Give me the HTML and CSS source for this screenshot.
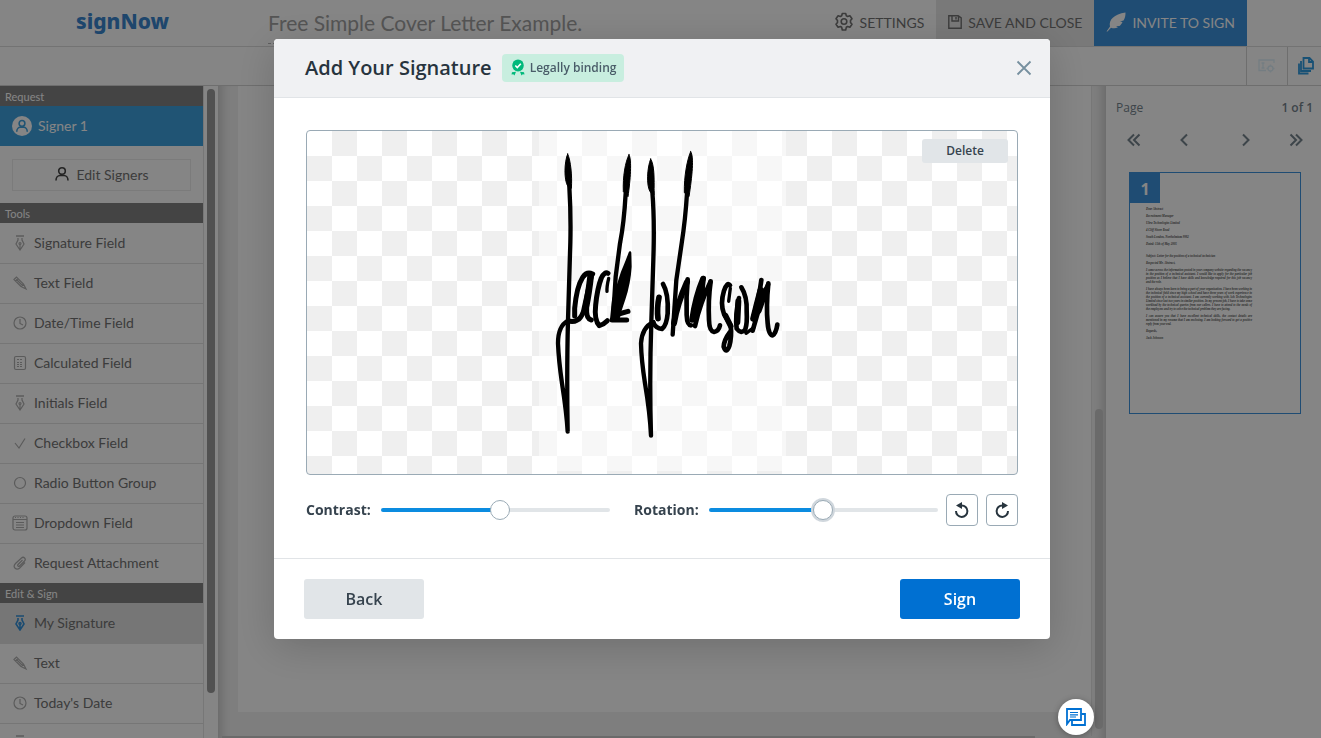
FILE: index.html
```html
<!DOCTYPE html>
<html lang="en">
<head>
    <meta charset="UTF-8">
    <meta name="viewport" content="width=device-width, initial-scale=1.0">
    <title>signNow - Add Your Signature</title>
    <link rel="stylesheet" href="styles.css">
</head>
<body>
    <!-- shared icons -->
    <svg class="sprite" width="0" height="0">
        <symbol id="pen" viewBox="0 0 16 16">
            <path d="M4 1h8" stroke-width="1.5"/>
            <path d="M6 3v2L4 9l4 6 4-6-2-4V3M8 14V9.500"/>
            <circle cx="8" cy="8.500" r="1"/>
        </symbol>
        <symbol id="pencil" viewBox="0 0 16 16">
            <path d="M2 4.500 4.500 2l7 7 2.500 5-5-2.500zM3.500 6 6 3.500M4.500 4.500l6 6M9 11.500 11.500 9"/>
        </symbol>
        <symbol id="clock" viewBox="0 0 16 16">
            <circle cx="8" cy="8" r="6"/>
            <path d="M8 4v4.500l3 1.500"/>
        </symbol>
        <symbol id="calc" viewBox="0 0 16 16">
            <rect x="2.500" y="1.500" width="11" height="13" rx="1.500"/>
            <path d="M5 4.500h6M5 7.500h6M5 9.500h6M5 11.500h6" stroke-dasharray="2 1"/>
        </symbol>
        <symbol id="check" viewBox="0 0 16 16"><path d="m3 8 4 5 6-9.500"/></symbol>
        <symbol id="radio" viewBox="0 0 16 16"><circle cx="8" cy="8" r="5.500"/></symbol>
        <symbol id="list" viewBox="0 0 16 16">
            <rect x="1" y="1" width="14" height="14" rx="2"/>
            <path d="M1 4.500h14M4 7.500h8M4 10h8M4 12.500h8"/>
            <path d="M3 2.500h10" stroke-dasharray="1 1.500"/>
        </symbol>
        <symbol id="clip" viewBox="0 0 16 16">
            <path d="M10.500 5 6 9.500c-1 1.200.5 2.500 1.500 1.500l5-5c2-2-.8-5-3-3L3.500 8.500c-3.500 3.700 1 7.500 4.200 4.500L13 7.500"/>
        </symbol>
        <symbol id="person" viewBox="0 0 16 16">
            <circle cx="8" cy="5" r="3.300"/>
            <path d="M2 14.500c0-3 2-5 4-5h4c2 0 4 2 4 5"/>
        </symbol>
    </svg>

    <div class="app">
        <header class="topbar">
            <a class="logo" href="#">signNow</a>
            <input class="doc-title" type="text" aria-label="Document name" value="Free Simple Cover Letter Example.">
            <button class="top-btn">
                <svg width="20" height="20" viewBox="0 0 20 20" fill="none" stroke="currentColor" stroke-width="1.600" stroke-linejoin="round"><path d="m8.300 1.500h3.400l.6 2.300 1.300.7 2.300-.7 2.100 2.900-1.500 1.900v1.800l1.500 1.900-2.100 2.900-2.300-.7-1.300.8-.6 2.700H8.300l-.6-2.700-1.300-.8-2.300.7L2 12.300l1.500-1.900V8.600L2 6.700l2.100-2.900 2.300.7 1.300-.7z"/><circle cx="10" cy="9.500" r="2.800"/></svg>
                <span>SETTINGS</span>
            </button>
            <button class="top-btn save">
                <svg width="14" height="14" viewBox="0 0 14 14" fill="none" stroke="currentColor" stroke-width="1.400"><path d="M.8.800h9.400l3 2v10.400H.800zM4 1v5h6.500V1M8 2v2.500"/></svg>
                <span>SAVE AND CLOSE</span>
            </button>
            <button class="top-btn invite">
                <svg width="20" height="20" viewBox="0 0 20 20" fill="currentColor"><path d="M.5 19.500 4 14.500C2.500 8 8 2 19.500.500 19.500 4 19 6 17.500 8.500L14 9.500l2.500.5c-.8 1.800-1.800 3-3 4L10 14.200l2 1c-2 1.200-4.300 1.400-7 .5l-3.500 3.800z"/></svg>
                <span>INVITE TO SIGN</span>
            </button>
        </header>

        <div class="toolbar">
            <button class="tool-btn" aria-label="Field settings" disabled>
                <svg width="18" height="14" viewBox="0 0 18 14" fill="none" stroke="#dff0fa" stroke-width="1.300"><path d="M8 11.500H1V1h15v3M3.500 4h3M5 4v5M3.500 9h3"/><circle cx="12.500" cy="9.500" r="2.500"/><path d="M12.500 5.500v1.500M12.500 12v1.500M8.500 9.500H10M15 9.500h1.500"/></svg>
            </button>
            <button class="tool-btn" aria-label="Pages">
                <svg width="16" height="18" viewBox="0 0 16 18" fill="none" stroke="#2f9be0" stroke-width="1.800"><path d="M5.500 1h6l3.500 3.500v7H5.500zM11 1v4h4M3 4v10h10M1 6.500V16.500h9.500"/></svg>
            </button>
        </div>

        <div class="workspace">
            <aside class="sidebar">
                <nav class="tools">
                    <h2 class="section">Request</h2>
                    <button class="signer">
                        <span class="avatar"><svg class="icon"><use href="#person"/></svg></span>
                        Signer 1
                    </button>
                    <div class="edit-wrap">
                        <button class="edit-signers"><svg class="icon"><use href="#person"/></svg>Edit Signers</button>
                    </div>
                    <h2 class="section">Tools</h2>
                    <button class="item"><svg class="icon"><use href="#pen"/></svg>Signature Field</button>
                    <button class="item"><svg class="icon"><use href="#pencil"/></svg>Text Field</button>
                    <button class="item"><svg class="icon"><use href="#clock"/></svg>Date/Time Field</button>
                    <button class="item"><svg class="icon"><use href="#calc"/></svg>Calculated Field</button>
                    <button class="item"><svg class="icon"><use href="#pen"/></svg>Initials Field</button>
                    <button class="item"><svg class="icon"><use href="#check"/></svg>Checkbox Field</button>
                    <button class="item"><svg class="icon"><use href="#radio"/></svg>Radio Button Group</button>
                    <button class="item"><svg class="icon"><use href="#list"/></svg>Dropdown Field</button>
                    <button class="item"><svg class="icon"><use href="#clip"/></svg>Request Attachment</button>
                    <h2 class="section">Edit &amp; Sign</h2>
                    <button class="item active"><svg class="icon"><use href="#pen"/></svg>My Signature</button>
                    <button class="item"><svg class="icon"><use href="#pencil"/></svg>Text</button>
                    <button class="item"><svg class="icon"><use href="#clock"/></svg>Today's Date</button>
                    <button class="item"><svg class="icon"><use href="#pen"/></svg>My Initials</button>
                </nav>
                <div class="scroll"><div class="scroll-thumb"></div></div>
            </aside>

            <main class="document">
                <div class="document-row">
                    <div class="paper"></div>
                    <div class="scroll scroll-doc"><div class="scroll-thumb"></div></div>
                </div>
                <div class="scroll-x"><div class="scroll-x-thumb"></div></div>
            </main>

            <aside class="pages">
                <div class="pages-head"><span>Page</span><b>1 of 1</b></div>
                <div class="pager">
                    <button aria-label="First page"><svg width="14" height="14" viewBox="0 0 14 14"><path d="M7 1.500 1.500 7 7 12.500M12.500 1.500 7 7l5.500 5.500"/></svg></button>
                    <button aria-label="Previous page"><svg width="14" height="14" viewBox="0 0 14 14"><path d="M10 1.500 4.500 7l5.500 5.500"/></svg></button>
                    <button aria-label="Next page"><svg width="14" height="14" viewBox="0 0 14 14"><path d="M4 1.500 9.500 7 4 12.500"/></svg></button>
                    <button aria-label="Last page"><svg width="14" height="14" viewBox="0 0 14 14"><path d="M7 1.500 12.500 7 7 12.500M1.500 1.500 7 7l-5.500 5.500"/></svg></button>
                </div>
                <div class="thumb">
                    <span class="thumb-number">1</span>
                    <div class="letter">
                        <p>Dear Abstract</p>
                        <p>Recruitment Manager</p>
                        <p>Ultra Technologies Limited</p>
                        <p>4 Cliff Shore Road</p>
                        <p>South London, Northolmium 9982</p>
                        <p>Dated: 11th of May 2005</p>
                        <p class="subject">Subject: Letter for the position of a technical technician</p>
                        <p>Respected Mr. Abstract,</p>
                        <p>I came across the information posted in your company website regarding the vacancy in the position of a technical assistant. I would like to apply for the particular job position as I believe that I have skills and knowledge required for this job vacancy and the role.</p>
                        <p>I have always been keen to being a part of your organization. I have been working in the technical field since my high school and have three years of work experience in the position of a technical assistant. I am currently working with Ash Technologies Limited since last two years in similar position. In my present job, I have to take some workload by the technical queries from our callers. I have to attend to the needs of the employees and try to solve the technical problem they are facing.</p>
                        <p>I can assure you that I have excellent technical skills, the contact details are mentioned in my resume that I am enclosing. I am looking forward to get a positive reply from your end.</p>
                        <p>Regards,</p>
                        <p>Jack Johnson</p>
                    </div>
                </div>
            </aside>
        </div>
    </div>

    <div class="overlay">
        <div class="modal" role="dialog" aria-labelledby="modal-title">
            <div class="modal-header">
                <h1 id="modal-title">Add Your Signature</h1>
                <span class="badge">
                    <svg width="14" height="17" viewBox="0 0 14 17"><path fill="#00b97b" d="M7 .5 9.200 1l2.200 1.300 1 2.200.4 2-.4 2-1 2L9.200 12 7 12.400 4.800 12 2.600 10.500l-1-2-.4-2 .4-2 1-2.200L4.800 1zM1 13.200l4-.4L3.500 16.500l-1.200-1.200-1.800.3zM13 13.200l-4-.4 1.500 3.700 1.200-1.200 1.800.3z"/><path d="m4.300 6.500 2 2 3.500-3.700" fill="none" stroke="#fff" stroke-width="1.600"/></svg>
                    Legally binding
                </span>
                <button class="close" aria-label="Close">
                    <svg width="16" height="16" viewBox="0 0 16 16" fill="none" stroke="#76909f" stroke-width="1.800"><path d="m1.500 1.500 13 13M14.500 1.500l-13 13"/></svg>
                </button>
            </div>

            <div class="modal-body">
                <div class="signature-area">
                    <svg class="signature" viewBox="-3 -327 741 1020" fill="none" stroke="#000" stroke-width="13" stroke-linecap="round" stroke-linejoin="round">
                        <!-- thick tops of the four stems -->
                        <g fill="#000" stroke-width="3">
                            <path d="M83-258C92-240 97-190 94-155L84-160C71-180 73-235 83-258z"/>
                            <path d="M267-256C276-240 271-180 264-130L250-145C248-190 256-235 267-256z"/>
                            <path d="M332-243C343-225 343-190 342-135L330-145C319-165 321-215 332-243z"/>
                            <path d="M452-265C463-250 456-190 447-130L433-142C432-190 441-240 452-265z"/>
                        </g>
                        <!-- Jack -->
                        <path d="M88-160Q94-60 90 40L84 240Q80 390 83 575 80 520 66 430 56 360 54 310 54 258 84 242"/>
                        <path d="M257-140Q252-50 240 10L227 110 219 238"/>
                        <g stroke-width="15">
                            <path d="M84 242Q98 248 112 240 122 236 130 216L153 112"/>
                            <path d="M158 102Q140 94 128 112 110 140 104 205V228"/>
                            <path stroke-width="20" d="M152 108Q146 160 138 200"/>
                            <path d="M140 205Q138 236 154 240"/>
                            <path stroke-width="10" d="M201 154Q200 140 206 115"/>
                            <path d="M204 100Q194 94 184 114 172 145 167 195 162 240 178 257 190 254 202 242"/>
                            <path d="M216 240H260M264 214 236 222"/>
                        </g>
                        <path fill="#000" stroke-width="8" d="M270 38Q262 60 247 96L220 180 214 238 234 240Q240 210 252 178 268 130 271 80z"/>
                        <!-- Johnson -->
                        <path d="M337-145Q344-60 340 60L334 245Q328 420 333 587 330 520 315 430 304 360 303 310 306 262 340 246"/>
                        <path d="M441-140Q436-60 425 10L409 120 398 284"/>
                        <g stroke-width="14">
                            <path d="M340 248Q348 266 366 267 380 256 383 220 386 160 369 132"/>
                            <path stroke-width="17" d="M357 172Q350 205 354 236"/>
                            <path stroke-width="18" d="M402 250Q412 190 441 126"/>
                            <path d="M443 118Q438 170 440 225 441 256 453 256"/>
                            <path stroke-width="17" d="M456 240Q466 170 489 116"/>
                            <path d="M491 114Q484 190 465 258 480 190 511 126"/>
                            <path stroke-width="17" d="M486 140Q476 175 468 222"/>
                            <path d="M512 124Q504 180 507 240 508 274 522 276 536 274 540 256"/>
                            <path stroke-width="10" d="M566 184 571 145"/>
                            <path d="M570 136Q562 124 552 152 540 192 552 222L572 256Q576 290 568 318 559 344 551 320 552 300 570 276"/>
                            <path stroke-width="17" d="M556 226 572 258"/>
                            <path d="M597 174Q585 225 590 266 604 284 616 268 622 250 620 215 622 170 604 142"/>
                            <path stroke-width="18" d="M595 184 592 246"/>
                            <path stroke-width="10" d="M618 280 642 262"/>
                            <path d="M664 120Q658 170 640 232"/>
                            <path stroke-width="19" d="M662 150Q650 195 640 236"/>
                            <path d="M638 272Q660 190 684 134"/>
                            <path stroke-width="18" d="M678 150 656 212"/>
                            <path d="M685 130Q678 200 683 250 686 286 698 286 708 280 712 254"/>
                        </g>
                    </svg>
                    <button class="delete">Delete</button>
                </div>

                <div class="controls">
                    <label for="contrast">Contrast:</label>
                    <input type="range" class="slider" id="contrast" min="0" max="100" value="52" style="--value: 52%">
                    <label for="rotation">Rotation:</label>
                    <input type="range" class="slider focused" id="rotation" min="-180" max="180" value="0" style="--value: 50%">
                    <button class="rotate" aria-label="Rotate left">
                        <svg width="16" height="18" viewBox="0 0 16 18"><path d="M2 10A5.700 5.700 0 1 0 7.500 4.500H5" fill="none" stroke="#27343e" stroke-width="2"/><path d="M2 4.500 8 1v7z" fill="#27343e"/></svg>
                    </button>
                    <button class="rotate" aria-label="Rotate right">
                        <svg width="16" height="18" viewBox="0 0 16 18"><path d="M14 10A5.700 5.700 0 1 1 8.500 4.500H11" fill="none" stroke="#27343e" stroke-width="2"/><path d="M14 4.500 8 1v7z" fill="#27343e"/></svg>
                    </button>
                </div>
            </div>

            <div class="modal-footer">
                <button class="btn">Back</button>
                <button class="btn primary">Sign</button>
            </div>
        </div>
    </div>

    <button class="chat" aria-label="Chat">
        <svg width="20" height="18" viewBox="0 0 20 18" fill="none" stroke="#0070d2" stroke-width="1.800"><path d="M1 16V1h14v11H4z"/><path d="M15.500 6H19v11H6v-4.500"/><path d="M4 4.500h8M4 6.800h8M4 9h6" stroke-width="1.200"/></svg>
    </button>
</body>
</html>
```

FILE: styles.css
```css
* {
    box-sizing: border-box;
}
body {
    margin: 0;
    font-family: Lato, sans-serif;
    color: #737373;
    overflow: hidden;
}
button {
    font: inherit;
    color: inherit;
    background: none;
    border: none;
    padding: 0;
    cursor: pointer;
}
.sprite {
    position: absolute;
}
.icon {
    width: 16px;
    height: 16px;
    flex: none;
    fill: none;
    stroke: #afafaf;
    stroke-width: 1.2;
}
.app {
    display: flex;
    flex-direction: column;
    height: 100vh;
    background-color: white;
}

/* top bars */
.topbar {
    display: flex;
    height: 47px;
    padding-right: 74px;
    border-bottom: 1px solid #dcdcdc;
}
.logo {
    width: 268px;
    padding-left: 76px;
    font-family: "Noto Sans", sans-serif;
    font-size: 21px;
    font-weight: 800;
    line-height: 42px;
    color: #3a86d0;
    text-decoration: none;
}
.doc-title {
    flex: 1;
    min-width: 0;
    height: 44px;
    margin-right: 160px;
    padding: 2px 0 0;
    border: none;
    border-bottom: 1px dashed #b5b5b5;
    background: none;
    font-family: Lato, sans-serif;
    font-size: 21px;
    color: #a2a2a2;
}
.top-btn {
    display: flex;
    align-items: center;
    gap: 6px;
    padding: 0 12px 2px;
    font-size: 14px;
    white-space: nowrap;
}
.save {
    background-color: #e8e8e8;
}
.invite {
    background-color: #3c92dd;
    color: white;
}
.toolbar {
    display: flex;
    justify-content: flex-end;
    height: 39px;
    border-bottom: 1px solid #d4d4d4;
}
.tool-btn {
    display: flex;
    align-items: center;
    justify-content: center;
    width: 41px;
    border-left: 1px solid #d4d4d4;
}
.tool-btn:last-child {
    width: 34px;
    padding-left: 3px;
}

/* left sidebar */
.workspace {
    display: flex;
    flex: 1;
    min-height: 0;
}
.sidebar {
    display: flex;
    flex: none;
    width: 218px;
    overflow: hidden;
}
.tools {
    width: 203px;
    font-size: 14px;
}
.section {
    margin: 0;
    height: 20px;
    padding: 1px 5px;
    background-color: #838383;
    color: white;
    font-size: 11px;
    font-weight: normal;
    line-height: 20px;
}
.signer {
    display: flex;
    align-items: center;
    gap: 6px;
    width: 100%;
    height: 40px;
    padding: 0 0 1px 12px;
    background-color: #3ea2df;
    color: white;
}
.avatar {
    display: flex;
    align-items: center;
    justify-content: center;
    width: 20px;
    height: 20px;
    border-radius: 50%;
    background-color: white;
}
.avatar .icon {
    width: 14px;
    height: 14px;
    stroke: #3ea2df;
    stroke-width: 1.8;
}
.edit-wrap {
    padding: 13px 12px 12px;
}
.edit-signers {
    display: flex;
    align-items: center;
    justify-content: center;
    gap: 6px;
    width: 100%;
    height: 32px;
    padding-bottom: 2px;
    border: 1px solid #ececec;
}
.edit-signers .icon {
    stroke: #444;
    stroke-width: 1.6;
}
.item {
    display: flex;
    align-items: center;
    gap: 6px;
    width: 100%;
    height: 40px;
    padding: 0 0 2px 12px;
    border-top: 1px solid #e2e2e2;
}
.section + .item {
    border-top-color: transparent;
}
.item.active {
    background-color: #e2e2e2;
}
.item.active .icon {
    stroke: #3390d8;
    stroke-width: 1.6;
}
.scroll {
    width: 15px;
    padding: 3px 3px 0;
    border-left: 1px solid #e4e4e4;
}
.scroll-thumb {
    width: 8px;
    height: 93%;
    border-radius: 4px;
    background-color: #9c9c9c;
}

/* document */
.document {
    display: flex;
    flex-direction: column;
    flex: 1;
    min-width: 0;
    background-color: #f2f2f2;
    box-shadow: inset 12px 0 10px -8px #ccc, inset -12px 0 10px -8px #ccc;
}
.document-row {
    display: flex;
    flex: 1;
    padding-left: 20px;
}
.paper {
    flex: 1;
    margin-bottom: 24px;
    background-color: white;
}
.scroll-doc {
    display: flex;
    align-items: flex-end;
    padding-bottom: 7px;
}
.scroll-doc .scroll-thumb {
    height: 50%;
    background-color: #ccc;
}
.scroll-x {
    height: 2px;
    padding-left: 4px;
}
.scroll-x-thumb {
    width: 92%;
    height: 2px;
    background-color: #ccc;
}

/* pages panel */
.pages {
    flex: none;
    width: 215px;
    color: #76848e;
    font-family: "Open Sans", sans-serif;
}
.pages-head {
    display: flex;
    justify-content: space-between;
    padding: 12px 8px 0 10px;
    font-size: 12px;
    line-height: 20px;
}
.pages-head b {
    font-weight: 600;
}
.pager {
    display: flex;
    justify-content: space-between;
    padding: 14px 18px 24px 21px;
}
.pager button {
    display: flex;
    height: 16px;
    align-items: center;
}
.pager button:nth-child(2) {
    margin-right: 12px;
}
.pager svg {
    fill: none;
    stroke: #76848e;
    stroke-width: 2;
}
.thumb {
    height: 242px;
    margin: 0 20px 0 23px;
    border: 1px solid #3c92dd;
}
.thumb-number {
    display: block;
    width: 30px;
    height: 30px;
    background-color: #3c92dd;
    color: white;
    font-size: 16px;
    font-weight: bold;
    line-height: 32px;
    text-align: center;
}
.letter {
    padding: 4px 48px 0 16px;
    color: #555;
    font-family: "Liberation Serif", serif;
    font-size: 3px;
    font-style: italic;
    font-weight: bold;
    line-height: 4px;
    text-align: justify;
}
.letter p {
    margin: 0 0 3px;
}
.letter .subject {
    margin-top: 8px;
}

/* modal */
.overlay {
    position: fixed;
    inset: 0;
    display: flex;
    justify-content: center;
    align-items: flex-start;
    padding: 39px 0 0 3px;
    background-color: rgba(0, 0, 0, 0.48);
    font-family: "Open Sans", sans-serif;
    color: #36434e;
}
.modal {
    width: 776px;
    border-radius: 4px;
    background-color: white;
    box-shadow: 0 8px 40px rgba(0, 0, 0, 0.18);
    overflow: hidden;
}
.modal-header {
    display: flex;
    align-items: center;
    height: 59px;
    padding: 0 18px 0 31px;
    border-bottom: 1px solid #e1e4e7;
    background-color: #f0f1f3;
}
.modal-header h1 {
    margin: 0;
    padding-bottom: 2px;
    font-size: 20px;
    font-weight: 600;
    color: #27343e;
}
.badge {
    display: flex;
    align-items: center;
    gap: 5px;
    height: 28px;
    margin-left: 10px;
    padding: 0 8px 1px 9px;
    border-radius: 4px;
    background-color: #c8eedf;
    color: #4a5d69;
    font-size: 12px;
    font-weight: 600;
}
.close {
    display: flex;
    margin-left: auto;
}
.modal-body {
    padding: 32px;
}
.signature-area {
    position: relative;
    height: 345px;
    border: 1px solid #9aaab5;
    border-radius: 4px;
    background: repeating-conic-gradient(#efefef 0 25%, white 0 50%) 0 0 / 50px 50px;
    overflow: hidden;
}
.signature {
    display: block;
    width: 247px;
    height: 340px;
    margin: 0 auto;
    background-color: rgba(255, 255, 255, 0.5);
}
.delete {
    position: absolute;
    top: 8px;
    right: 9px;
    width: 86px;
    height: 24px;
    padding-bottom: 2px;
    border-radius: 3px;
    background-color: #e1e5e8;
    font-size: 12px;
    font-weight: 600;
}
.controls {
    display: flex;
    align-items: center;
    gap: 8px;
    margin-top: 19px;
    font-size: 14px;
    font-weight: bold;
}
.controls label {
    padding-bottom: 2px;
}
.slider + label {
    margin-left: 16px;
}
.slider {
    -webkit-appearance: none;
    appearance: none;
    flex: 1;
    min-width: 0;
    height: 20px;
    margin: 0 0 0 2px;
    background: none;
}
.slider::-webkit-slider-runnable-track {
    height: 4px;
    border-radius: 2px;
    background: linear-gradient(to right, #0c8ce0 var(--value), #e1e5e8 var(--value));
}
.slider::-webkit-slider-thumb {
    -webkit-appearance: none;
    width: 20px;
    height: 20px;
    margin-top: -8px;
    border: 1px solid #9aaab5;
    border-radius: 50%;
    background-color: white;
}
.slider.focused::-webkit-slider-thumb {
    box-shadow: 0 0 0 2px #d0d7dd;
}
.rotate {
    display: flex;
    align-items: center;
    justify-content: center;
    width: 32px;
    height: 32px;
    border: 1px solid #9aaab5;
    border-radius: 4px;
}
.modal-footer {
    display: flex;
    justify-content: space-between;
    padding: 20px 30px;
    border-top: 1px solid #e1e4e7;
}
.btn {
    width: 120px;
    height: 40px;
    border-radius: 3px;
    background-color: #e1e5e8;
    font-size: 16px;
    font-weight: 600;
}
.primary {
    background-color: #0070d2;
    color: white;
}
.chat {
    position: fixed;
    right: 227px;
    bottom: 3px;
    display: flex;
    align-items: center;
    justify-content: center;
    width: 36px;
    height: 36px;
    border-radius: 50%;
    background-color: white;
    box-shadow: 0 1px 6px rgba(0, 0, 0, 0.3);
}
```
